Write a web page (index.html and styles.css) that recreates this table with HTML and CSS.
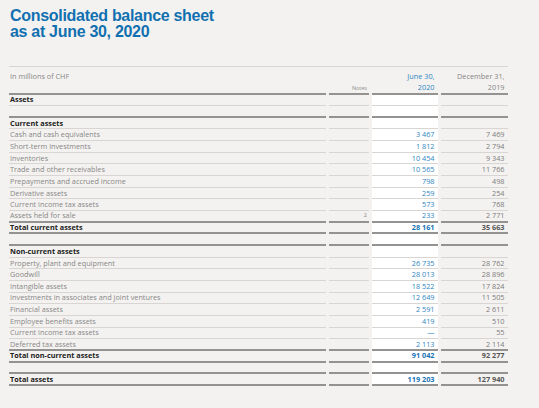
FILE: index.html
```html
<html>
    <head>
        <title>Consolidated balance sheet</title>
        <link rel="stylesheet" href="styles.css">
    </head>
    <body>
        <h1 class="title">Consolidated balance sheet<br>as at June 30, 2020</h1>
        <div class="rule"></div>
        <table class="sheet">
            <colgroup>
                <col class="c-label">
                <col class="c-notes">
                <col class="c-cur">
                <col class="c-prev">
            </colgroup>
            <thead>
                <tr>
                    <th class="label">In millions of CHF</th>
                    <th class="notes num">Notes</th>
                    <th class="cur num">June 30,<br>2020</th>
                    <th class="prev num">December 31,<br>2019</th>
                </tr>
            </thead>
            <tbody>
                <tr class="bold"><td>Assets</td><td></td><td class="cur"></td><td></td></tr>
                <tr class="gap"><td></td><td></td><td class="cur"></td><td></td></tr>

                <tr class="bold"><td>Current assets</td><td></td><td class="cur"></td><td></td></tr>
                <tr><td>Cash and cash equivalents</td><td class="notes num"></td><td class="cur num">3 467</td><td class="prev num">7 469</td></tr>
                <tr><td>Short-term investments</td><td class="notes num"></td><td class="cur num">1 812</td><td class="prev num">2 794</td></tr>
                <tr><td>Inventories</td><td class="notes num"></td><td class="cur num">10 454</td><td class="prev num">9 343</td></tr>
                <tr><td>Trade and other receivables</td><td class="notes num"></td><td class="cur num">10 565</td><td class="prev num">11 766</td></tr>
                <tr><td>Prepayments and accrued income</td><td class="notes num"></td><td class="cur num">798</td><td class="prev num">498</td></tr>
                <tr><td>Derivative assets</td><td class="notes num"></td><td class="cur num">259</td><td class="prev num">254</td></tr>
                <tr><td>Current income tax assets</td><td class="notes num"></td><td class="cur num">573</td><td class="prev num">768</td></tr>
                <tr class="end"><td>Assets held for sale</td><td class="notes num">2</td><td class="cur num">233</td><td class="prev num">2 771</td></tr>
                <tr class="total"><td>Total current assets</td><td class="notes num"></td><td class="cur num">28 161</td><td class="prev num">35 663</td></tr>
                <tr class="gap"><td></td><td></td><td class="cur"></td><td></td></tr>

                <tr class="bold"><td>Non-current assets</td><td></td><td class="cur"></td><td></td></tr>
                <tr><td>Property, plant and equipment</td><td class="notes num"></td><td class="cur num">26 735</td><td class="prev num">28 762</td></tr>
                <tr><td>Goodwill</td><td class="notes num"></td><td class="cur num">28 013</td><td class="prev num">28 896</td></tr>
                <tr><td>Intangible assets</td><td class="notes num"></td><td class="cur num">18 522</td><td class="prev num">17 824</td></tr>
                <tr><td>Investments in associates and joint ventures</td><td class="notes num"></td><td class="cur num">12 649</td><td class="prev num">11 505</td></tr>
                <tr><td>Financial assets</td><td class="notes num"></td><td class="cur num">2 591</td><td class="prev num">2 611</td></tr>
                <tr><td>Employee benefits assets</td><td class="notes num"></td><td class="cur num">419</td><td class="prev num">510</td></tr>
                <tr><td>Current income tax assets</td><td class="notes num"></td><td class="cur num">&mdash;</td><td class="prev num">55</td></tr>
                <tr class="end"><td>Deferred tax assets</td><td class="notes num"></td><td class="cur num">2 113</td><td class="prev num">2 114</td></tr>
                <tr class="total"><td>Total non-current assets</td><td class="notes num"></td><td class="cur num">91 042</td><td class="prev num">92 277</td></tr>
                <tr class="gap"><td></td><td></td><td class="cur"></td><td></td></tr>

                <tr class="total"><td>Total assets</td><td class="notes num"></td><td class="cur num">119 203</td><td class="prev num">127 940</td></tr>
            </tbody>
        </table>
    </body>
</html>
```

FILE: styles.css
```css
* {
    margin: 0;
}

body {
    padding: 0;
    background-color: #f4f2f0;
    font-family: "Open Sans", "Liberation Sans", sans-serif;
}

.title {
    padding: 8px 0 0 10px;
    font-family: "Liberation Sans", Arial, sans-serif;
    font-weight: bold;
    font-size: 16px;
    line-height: 16px;
    letter-spacing: -0.3px;
    color: #1170b0;
}

.rule {
    margin: 26px 0 0 9px;
    width: 499px;
    border-top: 1px solid #d9d5d2;
}

.sheet {
    margin-left: 6px;
    border-collapse: separate;
    border-spacing: 3px 0;
    table-layout: fixed;
    width: 505px;
    font-size: 7.3px;
}

.c-label { width: 317px; }
.c-notes { width: 40px; }
.c-cur { width: 66px; }
.c-prev { width: 67px; }

.sheet td,
.sheet th {
    box-sizing: border-box;
    height: 11.67px;
    padding: 0 0 0 1px;
    line-height: 9px;
    border-bottom: 1px solid #d9d5d2;
    font-weight: normal;
    text-align: left;
    vertical-align: middle;
    white-space: nowrap;
    color: #878787;
}

.sheet .num {
    text-align: right;
    padding-right: 3.5px;
}

.sheet .notes {
    padding-right: 2px;
    font-size: 5.5px;
}

.sheet .cur {
    color: #2f86c1;
}

.sheet .prev {
    color: #7c7c7c;
}

.sheet tbody .cur {
    background-color: #ffffff;
}

.sheet thead th {
    height: 26.5px;
    padding-top: 3.5px;
    line-height: 11px;
    vertical-align: top;
    border-bottom: 2px solid #959391;
}

.sheet thead .notes {
    vertical-align: bottom;
    padding-bottom: 1px;
    line-height: 7px;
    color: #8f8f8f;
}

.sheet thead .prev {
    color: #858585;
}

.bold td:first-child {
    font-weight: bold;
    color: #222222;
}

.end td,
.gap td {
    border-bottom: 2px solid #959391;
}

.total td {
    font-weight: bold;
    color: #222222;
    border-bottom: 2px solid #959391;
}

.total .cur {
    color: #1a74b3;
}

.total .prev {
    color: #555555;
}
```
